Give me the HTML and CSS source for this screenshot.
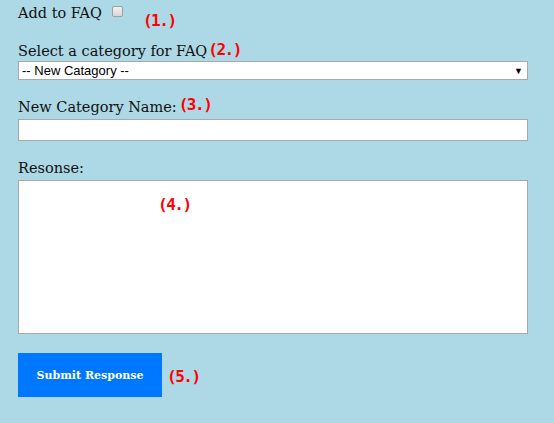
FILE: index.html
```html
<!DOCTYPE html>
<html>
<head>
<meta charset="utf-8">
<link rel="stylesheet" href="styles.css">
</head>
<body>
<form class="faq-form">
  <div class="row row-faq">
    <label class="label">Add to FAQ</label>
    <input type="checkbox" class="check">
    <span class="note note-1">(1.)</span>
  </div>
  <div class="row row-cat">
    <label class="label">Select a category for FAQ</label><span class="note note-2">(2.)</span>
  </div>
  <div class="select">
    <span class="select-text">-- New Catagory --</span>
    <span class="select-arrow">&#9660;</span>
  </div>
  <div class="row row-name">
    <label class="label">New Category Name:</label><span class="note note-3">(3.)</span>
  </div>
  <div class="text-input"></div>
  <div class="row row-resp">
    <label class="label">Resonse:</label>
  </div>
  <div class="textarea">
    <span class="note note-4">(4.)</span>
  </div>
  <div class="row row-submit">
    <button type="button" class="submit">Submit Response</button>
    <span class="note note-5">(5.)</span>
  </div>
</form>
</body>
</html>
```
FILE: styles.css
```css
html, body {
  margin: 0;
  padding: 0;
  background: #add8e6;
}
body {
  font-family: "DejaVu Serif", serif;
  font-size: 14.5px;
  color: #111;
  width: 554px;
  height: 423px;
  overflow: hidden;
}
.faq-form {
  padding: 0 26px 0 18px;
}
.row {
  display: flex;
  align-items: flex-start;
  line-height: 18px;
}
.label {
  white-space: nowrap;
}
.note {
  font-family: "DejaVu Sans Mono", monospace;
  font-weight: bold;
  font-size: 16px;
  letter-spacing: -1.5px;
  color: #ff0000;
  line-height: 18px;
}
.row-faq {
  padding-top: 4px;
  height: 34px;
  box-sizing: border-box;
}
.check {
  -webkit-appearance: none;
  appearance: none;
  margin: 2px 0 0 10px;
  width: 11px;
  height: 11px;
  box-sizing: border-box;
  border: 1px solid #a0a0a0;
  border-radius: 2px;
  background: linear-gradient(#f0f0f0, #d8d8d8);
}
.note-1 {
  margin: 8px 0 0 20px;
}
.row-cat {
  margin-top: 8px;
}
.note-2 {
  position: relative;
  top: -1px;
  margin-left: 1px;
}
.select {
  margin-top: 1px;
  height: 19px;
  box-sizing: border-box;
  background: #fff;
  border: 1px solid #a9a9a9;
  display: flex;
  align-items: center;
  justify-content: space-between;
  font-family: "Liberation Sans", Arial, sans-serif;
  font-size: 13px;
  color: #000;
  padding: 0 4px 0 3px;
}
.select-arrow {
  font-size: 9px;
}
.row-name {
  margin-top: 18px;
}
.note-3 {
  position: relative;
  top: -2px;
  margin-left: 2px;
}
.text-input {
  margin-top: 3px;
  height: 22px;
  box-sizing: border-box;
  background: #fff;
  border: 1px solid #a9a9a9;
}
.row-resp {
  margin-top: 18px;
}
.textarea {
  margin-top: 3px;
  height: 154px;
  box-sizing: border-box;
  background: #fff;
  border: 1px solid #a9a9a9;
  padding: 15px 0 0 139px;
}
.row-submit {
  margin-top: 19px;
  align-items: center;
}
.submit {
  width: 144px;
  height: 44px;
  border: 0;
  margin: 0;
  background: #0077ff;
  color: #fff;
  font-family: "DejaVu Serif", serif;
  font-weight: bold;
  font-size: 11px;
  padding: 0;
}
.note-5 {
  margin-left: 5px;
  margin-top: 4px;
}
```
